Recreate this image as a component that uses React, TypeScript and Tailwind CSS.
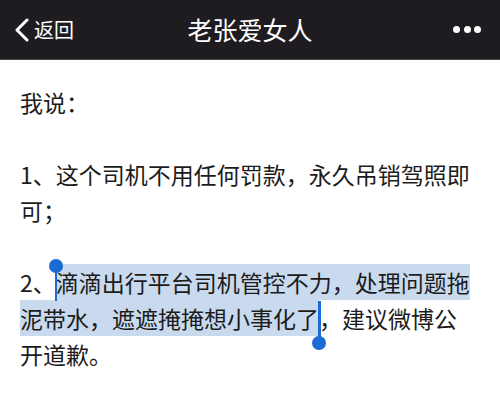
const cjk = { fontFamily: '"Noto Sans CJK SC", "Noto Sans", sans-serif' };

function StartHandle() {
  return (
    <span className="relative inline-block h-0 w-0 align-baseline">
      <span className="absolute -left-[1px] top-[-26px] h-[35px] w-[2.5px] bg-[#1a6bd6]" />
      <span className="absolute -left-[7px] top-[-33px] h-[14px] w-[14px] rounded-full bg-[#1a6bd6]" />
    </span>
  );
}

function EndHandle() {
  return (
    <span className="relative inline-block h-0 w-0 align-baseline">
      <span className="absolute -left-[1px] top-[-27px] h-[42px] w-[2.5px] bg-[#1a6bd6]" />
      <span className="absolute -left-[7px] top-[8px] h-[14px] w-[14px] rounded-full bg-[#1a6bd6]" />
    </span>
  );
}

export default function App() {
  return (
    <div className="h-[410px] w-[500px] overflow-hidden bg-white" style={cjk}>
      {/* nav bar */}
      <header className="relative flex h-[60px] items-center border-b border-[#4a4a4c] bg-[#1e1c20] text-white">
        <div className="flex items-center pl-[14px]">
          <svg width="16" height="24" viewBox="0 0 16 24" fill="none">
            <path d="M13 2 L3 12 L13 22" stroke="white" strokeWidth="3" strokeLinecap="round" strokeLinejoin="round" />
          </svg>
          <span className="ml-[4px] text-[20px] leading-none">返回</span>
        </div>
        <h1 className="absolute left-1/2 -translate-x-1/2 text-[25px] leading-none">老张爱女人</h1>
        <div className="ml-auto flex items-center gap-[3.5px] pr-[19px]">
          <span className="h-[7px] w-[7px] rounded-full bg-white" />
          <span className="h-[7px] w-[7px] rounded-full bg-white" />
          <span className="h-[7px] w-[7px] rounded-full bg-white" />
        </div>
      </header>

      {/* article */}
      <div className="pl-[20px] pr-[21px] pt-[24px] text-[23px] leading-[36px] text-[#1c1c1c]">
        <p>我说：</p>
        <p>&nbsp;</p>
        <p>1、这个司机不用任何罚款，永久吊销驾照即可；</p>
        <p>&nbsp;</p>
        <p>
          2、
          <StartHandle />
          <span className="bg-[#c9daee] py-[1px]">滴滴出行平台司机管控不力，处理问题拖泥带水，遮遮掩掩想小事化了</span>
          <EndHandle />
          ，建议微博公开道歉。
        </p>
      </div>
    </div>
  );
}
